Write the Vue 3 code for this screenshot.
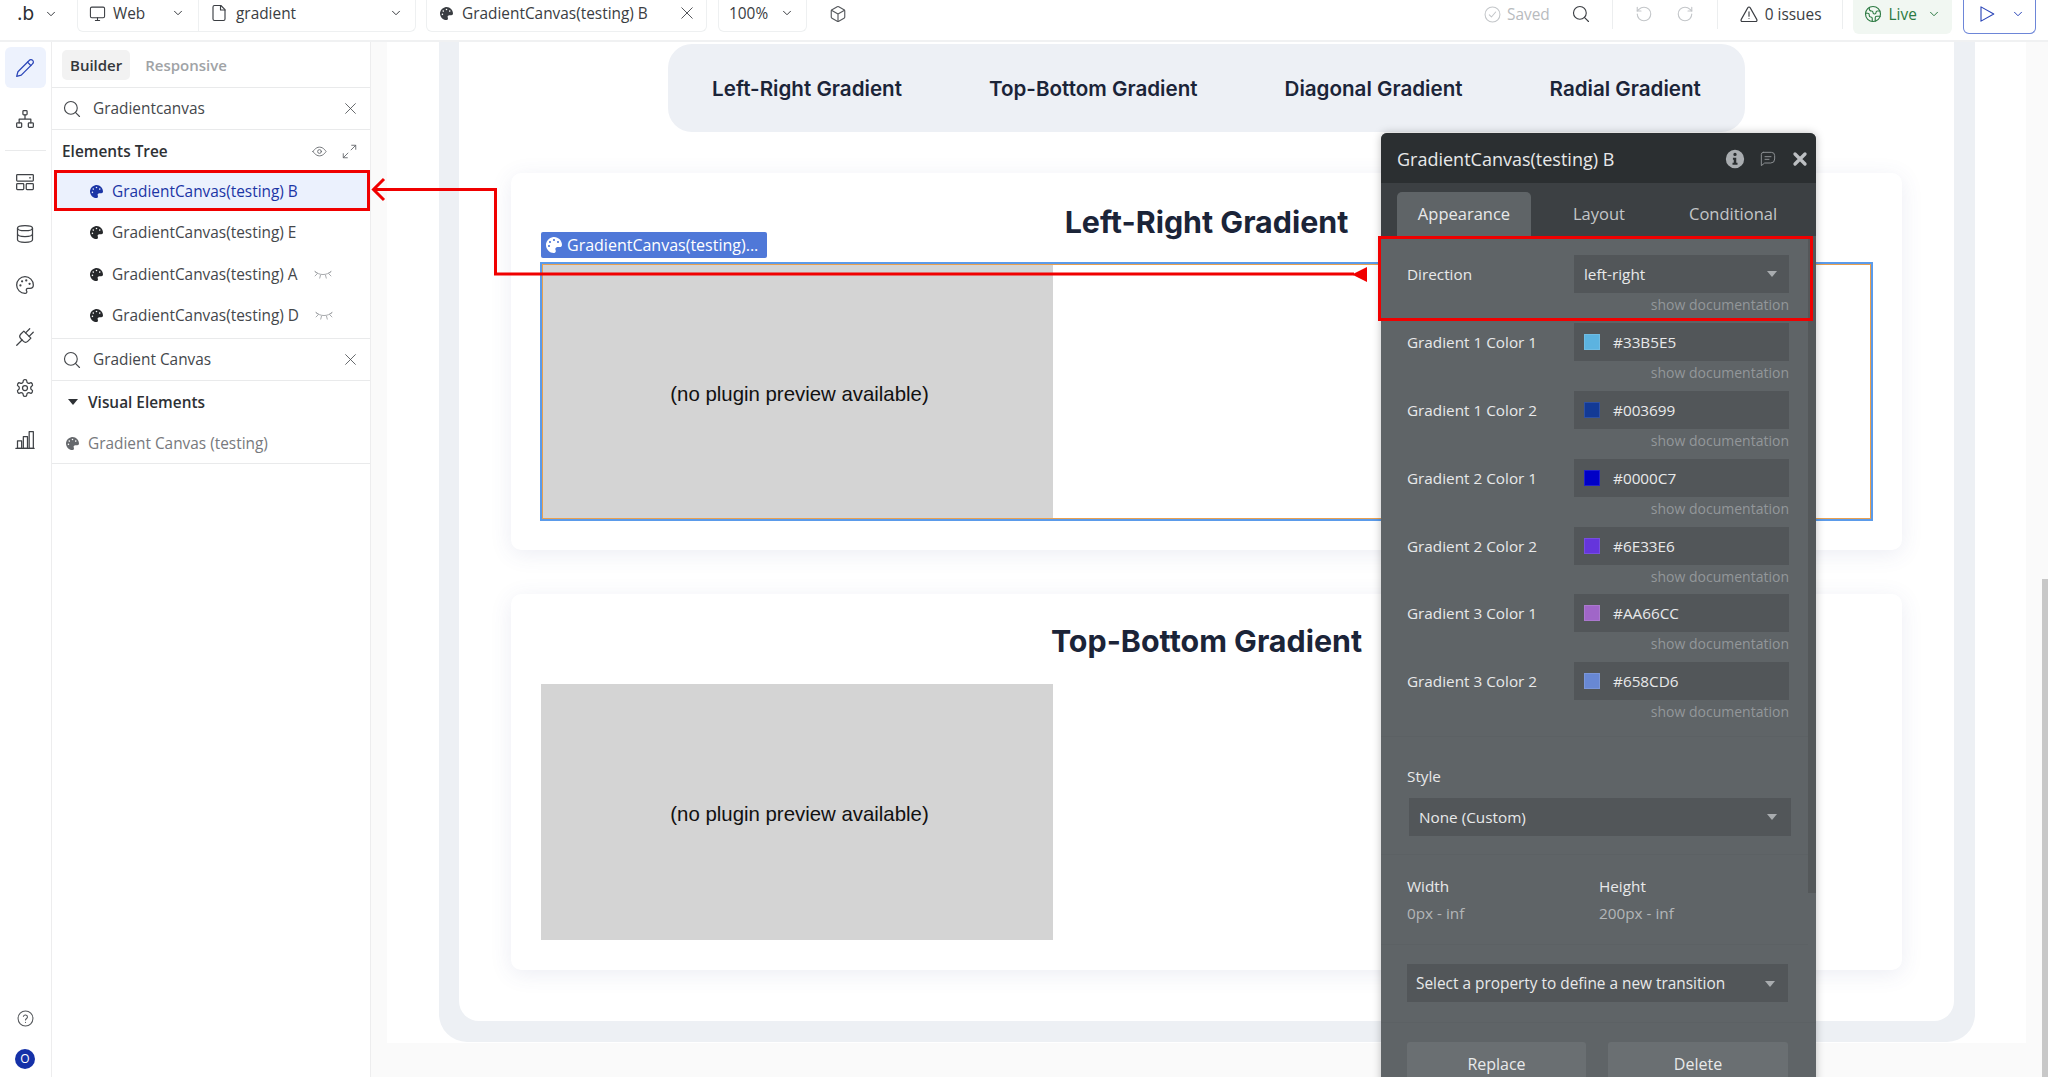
<script setup>
const treeRows = [
  { name: 'GradientCanvas(testing) B', selected: true },
  { name: 'GradientCanvas(testing) E' },
  { name: 'GradientCanvas(testing) A', hidden: true },
  { name: 'GradientCanvas(testing) D', hidden: true }
]

const railTop = ['i-hierarchy']
const railBottom = ['i-layout', 'i-db', 'i-palette-line', 'i-plug', 'i-gear', 'i-chart']

const pills = ['Left-Right Gradient', 'Top-Bottom Gradient', 'Diagonal Gradient', 'Radial Gradient']

const colors = [
  { label: 'Gradient 1 Color 1', value: '#33B5E5', swatch: '#5cb3e0' },
  { label: 'Gradient 1 Color 2', value: '#003699', swatch: '#133a96' },
  { label: 'Gradient 2 Color 1', value: '#0000C7', swatch: '#0000c7' },
  { label: 'Gradient 2 Color 2', value: '#6E33E6', swatch: '#6535dc' },
  { label: 'Gradient 3 Color 1', value: '#AA66CC', swatch: '#a066c8' },
  { label: 'Gradient 3 Color 2', value: '#658CD6', swatch: '#6888d4' }
]
</script>

<template>
  <div class="app">
    <svg class="sprite" aria-hidden="true">
      <symbol id="i-palette-fill" viewBox="0 0 512 512">
        <path fill="currentColor" stroke="none" d="M204.3 5C104.9 24.4 24.8 104.3 5.2 203.4c-37 187 131.7 326.4 258.8 306.7 41.2-6.4 61.4-54.6 42.5-91.7-23.1-45.4 9.9-98.4 60.9-98.4h79.7c35.8 0 64.8-29.6 64.9-65.3C511.5 97.1 368.1-26.9 204.3 5zM96 320c-17.7 0-32-14.3-32-32s14.3-32 32-32 32 14.3 32 32-14.3 32-32 32zm32-128c-17.7 0-32-14.3-32-32s14.3-32 32-32 32 14.3 32 32-14.3 32-32 32zm128-64c-17.7 0-32-14.3-32-32s14.3-32 32-32 32 14.3 32 32-14.3 32-32 32zm128 64c-17.7 0-32-14.3-32-32s14.3-32 32-32 32 14.3 32 32-14.3 32-32 32z" />
      </symbol>
      <symbol id="i-pencil" viewBox="0 0 24 24"><path d="M17 3a2.85 2.83 0 1 1 4 4L7.5 20.5 2 22l1.5-5.5Z" /><path d="m15 5 4 4" /></symbol>
      <symbol id="i-hierarchy" viewBox="0 0 24 24"><rect x="9.5" y="2" width="5" height="5" rx="1" /><rect x="2" y="16.5" width="6" height="5.5" rx="1" /><rect x="16" y="16.5" width="6" height="5.5" rx="1" /><path d="M12 7v5M5 16.5V12h14v4.5" /></symbol>
      <symbol id="i-layout" viewBox="0 0 24 24"><rect x="2" y="3" width="20" height="8" rx="1" /><rect x="2" y="14" width="8.5" height="7" rx="1" /><rect x="13.5" y="14" width="8.5" height="7" rx="1" /><path d="M17.5 7h1" /></symbol>
      <symbol id="i-db" viewBox="0 0 24 24"><ellipse cx="12" cy="5" rx="9" ry="3" /><path d="M3 5v14c0 1.66 4 3 9 3s9-1.34 9-3V5" /><path d="M3 12c0 1.66 4 3 9 3s9-1.34 9-3" /></symbol>
      <symbol id="i-palette-line" viewBox="0 0 24 24"><path d="M12 22a10 10 0 1 1 10-10c0 2.8-2.2 4-4 4h-2.5a2 2 0 0 0-1.5 3.3c.6.8.2 2.7-2 2.7z" /><circle cx="13.5" cy="6.5" r=".6" /><circle cx="17.5" cy="10.5" r=".6" /><circle cx="8.5" cy="7.5" r=".6" /><circle cx="6.5" cy="12.5" r=".6" /></symbol>
      <symbol id="i-plug" viewBox="0 0 24 24"><g transform="rotate(45 12 12)"><path d="M12 26v-9M9 8V1M15 8V1" /><path d="M18 8v5a4 4 0 0 1-4 4h-4a4 4 0 0 1-4-4V8Z" /></g></symbol>
      <symbol id="i-gear" viewBox="0 0 24 24"><path d="M12.22 2h-.44a2 2 0 0 0-2 2v.18a2 2 0 0 1-1 1.73l-.43.25a2 2 0 0 1-2 0l-.15-.08a2 2 0 0 0-2.73.73l-.22.38a2 2 0 0 0 .73 2.73l.15.1a2 2 0 0 1 1 1.72v.51a2 2 0 0 1-1 1.74l-.15.09a2 2 0 0 0-.73 2.73l.22.38a2 2 0 0 0 2.73.73l.15-.08a2 2 0 0 1 2 0l.43.25a2 2 0 0 1 1 1.73V20a2 2 0 0 0 2 2h.44a2 2 0 0 0 2-2v-.18a2 2 0 0 1 1-1.73l.43-.25a2 2 0 0 1 2 0l.15.08a2 2 0 0 0 2.73-.73l.22-.39a2 2 0 0 0-.73-2.73l-.15-.08a2 2 0 0 1-1-1.74v-.5a2 2 0 0 1 1-1.74l.15-.09a2 2 0 0 0 .73-2.73l-.22-.38a2 2 0 0 0-2.73-.73l-.15.08a2 2 0 0 1-2 0l-.43-.25a2 2 0 0 1-1-1.73V4a2 2 0 0 0-2-2z" /><circle cx="12" cy="12" r="3" /></symbol>
      <symbol id="i-chart" viewBox="0 0 24 24"><path d="M1 22h22" /><rect x="3" y="13" width="5" height="9" /><rect x="10" y="8" width="5" height="14" /><rect x="17" y="2" width="5" height="20" /></symbol>
      <symbol id="i-help" viewBox="0 0 24 24"><circle cx="12" cy="12" r="10.5" /><path d="M9 9a3 3 0 0 1 5.8 1c0 2-2.8 2.5-2.8 4" /><path d="M12 17.5h.01" /></symbol>
      <symbol id="i-search" viewBox="0 0 24 24"><circle cx="10.5" cy="10.5" r="8.5" /><path d="m22 22-5.5-5.5" /></symbol>
      <symbol id="i-x" viewBox="0 0 24 24"><path d="M3 3l18 18M21 3 3 21" /></symbol>
      <symbol id="i-eye" viewBox="0 0 24 24"><path d="M1.5 12S5.5 5 12 5s10.5 7 10.5 7-4 7-10.5 7S1.5 12 1.5 12Z" /><circle cx="12" cy="12" r="3" /></symbol>
      <symbol id="i-expand" viewBox="0 0 24 24"><path d="M14.5 9.5 22 2M15.5 2H22v6.5M9.5 14.5 2 22M8.5 22H2v-6.5" /></symbol>
      <symbol id="i-lashes" viewBox="0 0 24 18"><path d="M1 5c6 5.5 16 5.5 22 0" /><path d="M4 8 1 11M8.5 10 7.5 14M15.5 10l1 4M20 8l3 3" /><path d="M1 5l3 2M23 5l-3 2" /></symbol>
      <symbol id="i-monitor" viewBox="0 0 24 24"><rect x="2" y="3" width="20" height="15" rx="2" /><path d="M9 22h6M12 18v4" /></symbol>
      <symbol id="i-doc" viewBox="0 0 24 24"><path d="M14.5 2H6a2 2 0 0 0-2 2v16a2 2 0 0 0 2 2h12a2 2 0 0 0 2-2V7.5Z" /><path d="M14 2v6h6" /></symbol>
      <symbol id="i-chevron" viewBox="0 0 24 24"><path d="m5 8.5 7 7 7-7" /></symbol>
      <symbol id="i-box" viewBox="0 0 24 24"><path d="M21 8a2 2 0 0 0-1-1.73l-7-4a2 2 0 0 0-2 0l-7 4A2 2 0 0 0 3 8v8a2 2 0 0 0 1 1.73l7 4a2 2 0 0 0 2 0l7-4A2 2 0 0 0 21 16Z" /><path d="m3.3 7 8.7 5 8.7-5M12 22V12" /></symbol>
      <symbol id="i-check" viewBox="0 0 24 24"><circle cx="12" cy="12" r="10.5" /><path d="m7.5 12.5 3 3 6-7" /></symbol>
      <symbol id="i-undo" viewBox="0 0 24 24"><path d="M3 12a9 9 0 1 0 9-9 9.75 9.75 0 0 0-6.74 2.74L3 8" /><path d="M3 3v5h5" /></symbol>
      <symbol id="i-redo" viewBox="0 0 24 24"><path d="M21 12a9 9 0 1 1-9-9c2.52 0 4.93 1 6.74 2.74L21 8" /><path d="M21 3v5h-5" /></symbol>
      <symbol id="i-warn" viewBox="0 0 24 24"><path d="m22.5 19.5-9-16a1.7 1.7 0 0 0-3 0l-9 16A1.7 1.7 0 0 0 3 22h18a1.7 1.7 0 0 0 1.5-2.5Z" /><path d="M12 9v6M12 18h.01" /></symbol>
      <symbol id="i-globe" viewBox="0 0 24 24"><path d="M21.54 15H17a2 2 0 0 0-2 2v4.54" /><path d="M7 3.34V5a3 3 0 0 0 3 3 2 2 0 0 1 2 2c0 1.1.9 2 2 2a2 2 0 0 0 2-2c0-1.1.9-2 2-2h3.17" /><path d="M11 21.95V18a2 2 0 0 0-2-2 2 2 0 0 1-2-2v-1a2 2 0 0 0-2-2H2.05" /><circle cx="12" cy="12" r="10" /></symbol>
      <symbol id="i-play" viewBox="0 0 24 24"><path d="M4 2.5v19L21 12Z" /></symbol>
      <symbol id="i-info" viewBox="0 0 24 24"><path fill="currentColor" stroke="none" fill-rule="evenodd" d="M12 1a11 11 0 1 0 0 22 11 11 0 0 0 0-22Zm0 3.5a2 2 0 1 1 0 4 2 2 0 0 1 0-4ZM9.5 10.5h4v6H15V19H9v-2.5h1.5V13h-1Z" /></symbol>
      <symbol id="i-chat" viewBox="0 0 24 24"><path d="M5 2h12a5 5 0 0 1 5 5v5a6 6 0 0 1-6 6H7l-5 4V5a3 3 0 0 1 3-3Z" /><path d="M7.5 8.5h9M7.5 12.5h6" /></symbol>
      <symbol id="i-close-bold" viewBox="0 0 24 24"><path d="M4.5 4.5l15 15M19.5 4.5l-15 15" /></symbol>
    </svg>

    <header class="topbar">
      <div class="brand">
        <span class="logo">.b</span>
        <svg class="ic chev-sm"><use href="#i-chevron" /></svg>
      </div>
      <div class="group first">
        <svg class="ic ic-17"><use href="#i-monitor" /></svg>
        <span>Web</span>
        <svg class="ic chev-sm push"><use href="#i-chevron" /></svg>
      </div>
      <div class="group page-pick">
        <svg class="ic ic-18"><use href="#i-doc" /></svg>
        <span>gradient</span>
        <svg class="ic chev-sm push"><use href="#i-chevron" /></svg>
      </div>
      <div class="group open-tab">
        <svg class="ic ic-13"><use href="#i-palette-fill" /></svg>
        <span>GradientCanvas(testing) B</span>
        <svg class="ic ic-14 push"><use href="#i-x" /></svg>
      </div>
      <div class="group zoom">
        <span>100%</span>
        <svg class="ic chev-sm push"><use href="#i-chevron" /></svg>
      </div>
      <svg class="ic ic-18 cube"><use href="#i-box" /></svg>

      <div class="right">
        <svg class="ic ic-17 faded saved-ic"><use href="#i-check" /></svg>
        <span class="saved">Saved</span>
        <svg class="ic ic-18 search-top"><use href="#i-search" /></svg>
        <i class="vline"></i>
        <svg class="ic ic-18 undo faded"><use href="#i-undo" /></svg>
        <svg class="ic ic-18 redo faded"><use href="#i-redo" /></svg>
        <i class="vline two"></i>
        <svg class="ic ic-18 warn"><use href="#i-warn" /></svg>
        <span class="issues">0 issues</span>
        <i class="vline three"></i>
        <div class="live">
          <svg class="ic ic-18"><use href="#i-globe" /></svg>
          <span>Live</span>
          <svg class="ic chev-sm"><use href="#i-chevron" /></svg>
        </div>
        <div class="run">
          <svg class="ic ic-18"><use href="#i-play" /></svg>
          <svg class="ic chev-sm"><use href="#i-chevron" /></svg>
        </div>
      </div>
    </header>

    <div class="main">
      <nav class="rail">
        <div class="rail-btn active"><svg class="ic ic-20"><use href="#i-pencil" /></svg></div>
        <div v-for="icon in railTop" :key="icon" class="rail-btn"><svg class="ic ic-20"><use :href="'#' + icon" /></svg></div>
        <i class="rail-line"></i>
        <div v-for="icon in railBottom" :key="icon" class="rail-btn"><svg class="ic ic-20"><use :href="'#' + icon" /></svg></div>
        <svg class="ic ic-17 help"><use href="#i-help" /></svg>
        <div class="avatar">O</div>
      </nav>

      <aside class="sidebar">
        <div class="side-tabs">
          <span class="side-tab on">Builder</span>
          <span class="side-tab">Responsive</span>
        </div>
        <div class="search-row">
          <svg class="ic ic-18"><use href="#i-search" /></svg>
          <span>Gradientcanvas</span>
          <svg class="ic ic-13 push"><use href="#i-x" /></svg>
        </div>
        <div class="tree-head">
          <b>Elements Tree</b>
          <svg class="ic ic-15 eye"><use href="#i-eye" /></svg>
          <svg class="ic ic-15 expand"><use href="#i-expand" /></svg>
        </div>
        <div class="tree">
          <div v-for="row in treeRows" :key="row.name" class="tree-row" :class="{ selected: row.selected }">
            <svg class="ic ic-13"><use href="#i-palette-fill" /></svg>
            <span>{{ row.name }}</span>
            <svg v-if="row.hidden" class="ic lashes"><use href="#i-lashes" /></svg>
          </div>
        </div>
        <div class="search-row second">
          <svg class="ic ic-18"><use href="#i-search" /></svg>
          <span>Gradient Canvas</span>
          <svg class="ic ic-13 push"><use href="#i-x" /></svg>
        </div>
        <div class="visual-head">
          <i class="caret"></i>
          <b>Visual Elements</b>
        </div>
        <div class="visual-row">
          <svg class="ic ic-13"><use href="#i-palette-fill" /></svg>
          <span>Gradient Canvas (testing)</span>
        </div>
      </aside>

      <section class="canvas">
        <div class="page">
          <div class="frame">
            <div class="frame-inner">
              <div class="pills">
                <span v-for="p in pills" :key="p">{{ p }}</span>
              </div>

              <div class="card card-a">
                <h2>Left-Right Gradient</h2>
                <div class="preview">
                  <div class="plugin">(no plugin preview available)</div>
                  <div class="tag">
                    <svg class="ic ic-16"><use href="#i-palette-fill" /></svg>
                    <span>GradientCanvas(testing)...</span>
                  </div>
                  <div class="sel-box"></div>
                </div>
              </div>

              <div class="card card-b">
                <h2>Top-Bottom Gradient</h2>
                <div class="preview">
                  <div class="plugin">(no plugin preview available)</div>
                </div>
              </div>
            </div>
          </div>
        </div>

        <div class="panel">
          <div class="panel-head">
            <span>GradientCanvas(testing) B</span>
            <svg class="ic ic-20 info"><use href="#i-info" /></svg>
            <svg class="ic ic-16 chat"><use href="#i-chat" /></svg>
            <svg class="ic ic-16 close"><use href="#i-close-bold" /></svg>
          </div>
          <div class="panel-tabs">
            <span class="panel-tab on">Appearance</span>
            <span class="panel-tab layout">Layout</span>
            <span class="panel-tab cond">Conditional</span>
          </div>
          <div class="panel-body">
            <div class="prop">
              <label>Direction</label>
              <div class="field">
                <span>left-right</span>
                <i class="arrow"></i>
              </div>
              <em>show documentation</em>
            </div>
            <div v-for="c in colors" :key="c.label" class="prop">
              <label>{{ c.label }}</label>
              <div class="field">
                <i class="swatch" :style="{ background: c.swatch }"></i>
                <span>{{ c.value }}</span>
              </div>
              <em>show documentation</em>
            </div>

            <div class="block style-block">
              <label>Style</label>
              <div class="wide style-select">
                <span>None (Custom)</span>
                <i class="arrow"></i>
              </div>
            </div>
            <div class="block size-block">
              <div>
                <label>Width</label>
                <p>0px - inf</p>
              </div>
              <div>
                <label>Height</label>
                <p>200px - inf</p>
              </div>
            </div>
            <div class="block trans-block">
              <div class="wide">
                <span>Select a property to define a new transition</span>
                <i class="arrow"></i>
              </div>
            </div>
            <div class="btns">
              <button>Replace</button>
              <button>Delete</button>
            </div>

            <div class="panel-scroll"></div>
            <div class="red-box"></div>
          </div>
        </div>

        <div class="scrollbar"></div>
      </section>
    </div>

    <svg class="annot" viewBox="0 0 2048 1077" width="2048" height="1077">
      <path d="M1354 274H495.5V189.5H374" />
      <path d="M384 179 373.5 189.5 384 200" />
      <path class="tip" d="M1352 274.5 1367 267V282Z" />
    </svg>
  </div>
</template>

<style>
html,
body {
  margin: 0;
  padding: 0;
  overflow: hidden;
}
</style>

<style scoped>
.app {
  position: relative;
  width: 2048px;
  height: 1077px;
  overflow: hidden;
  display: flex;
  flex-direction: column;
  background: #fff;
  color: #3a3d42;
  font-family: "Open Sans", "Noto Sans", sans-serif;
  font-size: 15.4px;
}

.sprite {
  position: absolute;
  width: 0;
  height: 0;
}

.ic {
  flex: none;
  fill: none;
  stroke: currentColor;
  stroke-width: 1.5;
  stroke-linecap: round;
  stroke-linejoin: round;
}
.ic-13 { width: 13px; height: 13px; }
.ic-14 { width: 14px; height: 14px; }
.ic-15 { width: 15px; height: 15px; }
.ic-16 { width: 16px; height: 16px; }
.ic-17 { width: 17px; height: 17px; }
.ic-18 { width: 18px; height: 18px; }
.ic-20 { width: 20px; height: 20px; }
.chev-sm { width: 12px; height: 12px; stroke-width: 2; }
.push { margin-left: auto; }
.faded { color: #c3c6c9; }

/* top bar */
.topbar {
  flex: none;
  height: 42px;
  box-sizing: border-box;
  display: flex;
  align-items: flex-start;
  border-bottom: 2px solid #f0f1f2;
}
.brand {
  width: 77px;
  height: 27px;
  display: flex;
  align-items: center;
  padding-left: 17px;
  box-sizing: border-box;
}
.logo {
  width: 28px;
  font-size: 19px;
  line-height: 27px;
  font-family: "Inter", sans-serif;
  color: #2b2e33;
}
.group {
  height: 32px;
  box-sizing: border-box;
  padding: 0 14px 5px 11px;
  display: flex;
  align-items: center;
  border: 1px solid #eef0f1;
  border-top: 0;
  border-left: 0;
  gap: 7px;
}
.group.first {
  width: 122px;
  border-left: 1px solid #eef0f1;
  border-bottom-left-radius: 6px;
}
.group.page-pick {
  width: 217px;
  gap: 8px;
  padding-right: 13px;
  border-bottom-right-radius: 6px;
}
.group.open-tab {
  width: 281px;
  margin-left: 10px;
  padding-left: 13px;
  padding-right: 12px;
  gap: 9px;
  border-left: 1px solid #eef0f1;
  border-radius: 0 0 6px 6px;
}
.group.zoom {
  width: 89px;
  margin-left: 11px;
  padding-left: 10px;
  padding-right: 13px;
  border-left: 1px solid #eef0f1;
  border-radius: 0 0 6px 6px;
}
.cube {
  margin: 5px 0 0 22px;
  color: #55585c;
}
.right {
  flex: 1;
  height: 28px;
  display: flex;
  align-items: center;
  box-sizing: border-box;
}
.saved-ic { margin-left: 637px; }
.saved { margin-left: 6px; color: #b8bbbe; }
.search-top { margin-left: 22px; }
.vline {
  align-self: flex-start;
  width: 1px;
  height: 29px;
  background: #eceeef;
  margin-left: 22px;
}
.undo { margin-left: 22px; }
.redo { margin-left: 23px; }
.vline.two { margin-left: 23px; }
.warn { margin-left: 22px; }
.issues { margin-left: 7px; color: #3a3d42; }
.vline.three { margin-left: 20px; }
.live {
  align-self: flex-start;
  width: 99px;
  height: 34px;
  box-sizing: border-box;
  margin-left: 10px;
  padding: 0 0 6px 11px;
  display: flex;
  align-items: center;
  gap: 7px;
  background: #f1f7f2;
  border-radius: 0 0 6px 6px;
  color: #2c7a42;
}
.live .chev-sm { margin-left: 4px; }
.run {
  align-self: flex-start;
  width: 73px;
  height: 34px;
  box-sizing: border-box;
  margin-left: 11px;
  padding: 0 0 6px 14px;
  display: flex;
  align-items: center;
  gap: 16px;
  border: 1.5px solid #6d86d8;
  border-top: 0;
  border-radius: 0 0 6px 6px;
  color: #2a45b8;
}

.main {
  flex: 1;
  min-height: 0;
  display: flex;
}

/* left rail */
.rail {
  flex: none;
  width: 52px;
  box-sizing: border-box;
  padding: 5px 6px 8px 5px;
  border-right: 1px solid #ededee;
  display: flex;
  flex-direction: column;
  align-items: center;
  gap: 10.5px;
  color: #3f4246;
}
.rail-btn {
  width: 41px;
  height: 41px;
  display: flex;
  align-items: center;
  justify-content: center;
  border-radius: 6px;
  flex: none;
}
.rail-btn.active {
  background: #edf2fd;
  color: #2a45b8;
}
.rail-line {
  width: 41px;
  height: 1px;
  background: #e9eaeb;
}
.help {
  margin-top: auto;
  margin-bottom: 12px;
  color: #55585c;
}
.avatar {
  width: 20px;
  height: 20px;
  border-radius: 50%;
  background: #1531a8;
  color: #fff;
  font-size: 12px;
  line-height: 20px;
  text-align: center;
}

/* sidebar */
.sidebar {
  flex: none;
  width: 319px;
  box-sizing: border-box;
  border-right: 1px solid #ededee;
}
.side-tabs {
  height: 46px;
  box-sizing: border-box;
  padding: 8px 10px 0;
  display: flex;
  gap: 7px;
  border-bottom: 1px solid #e9eaeb;
}
.side-tab {
  height: 30px;
  line-height: 30px;
  padding: 0 8px;
  font-weight: 600;
  font-size: 15px;
  color: #a0a3a6;
  border-radius: 5px;
}
.side-tab.on {
  background: #f2f2f2;
  color: #34373b;
}
.search-row {
  height: 42px;
  box-sizing: border-box;
  padding: 0 13px 0 11px;
  display: flex;
  align-items: center;
  gap: 12px;
  border-bottom: 1px solid #e9eaeb;
  color: #44474b;
}
.tree-head {
  height: 40px;
  padding: 2px 13px 0 10px;
  box-sizing: border-box;
  display: flex;
  align-items: center;
}
.tree-head b,
.visual-head b {
  font-weight: 600;
  color: #2e3135;
}
.eye {
  margin-left: auto;
  color: #6b6e72;
}
.expand {
  margin-left: 15px;
  color: #6b6e72;
}
.tree {
  height: 169px;
  border-bottom: 1px solid #e9eaeb;
  box-sizing: border-box;
}
.tree-row {
  height: 41.3px;
  box-sizing: border-box;
  padding: 2px 0 0 38px;
  display: flex;
  align-items: center;
  gap: 9px;
  color: #44474b;
}
.tree-row .ic-13 { color: #26282b; }
.tree-row.selected {
  margin-left: 2px;
  padding: 1px 0 0 33px;
  border: 3px solid #f00000;
  background: #ebf1fd;
  color: #1b35a5;
}
.tree-row.selected .ic-13 { color: #1b35a5; }
.lashes {
  width: 18px;
  height: 13px;
  margin-left: 7px;
  color: #9a9da0;
  stroke-width: 1.2;
}
.search-row.second { height: 42px; }
.visual-head {
  height: 42px;
  padding-left: 16px;
  display: flex;
  align-items: center;
  gap: 10px;
  box-sizing: border-box;
}
.caret {
  width: 0;
  height: 0;
  border: 5px solid transparent;
  border-top: 6px solid #2e3135;
  border-bottom: 0;
}
.visual-row {
  height: 40px;
  padding-left: 14px;
  display: flex;
  align-items: center;
  gap: 9px;
  border-bottom: 1px solid #e9eaeb;
  color: #77797d;
}
.visual-row .ic-13 { color: #66696d; }

/* canvas */
.canvas {
  flex: 1;
  min-width: 0;
  position: relative;
  overflow: hidden;
  background: #fafafa;
  padding-left: 16px;
}
.page {
  width: 1639px;
  height: 1001px;
  background: #fff;
  padding-left: 52px;
  box-sizing: border-box;
}
.frame {
  width: 1536px;
  height: 1000px;
  box-sizing: border-box;
  padding: 0 21px 21px 20px;
  background: #edf0f4;
  border-radius: 0 0 28px 28px;
}
.frame-inner {
  height: 100%;
  box-sizing: border-box;
  padding: 2px 52px 0;
  background: #fff;
  border-radius: 0 0 20px 20px;
}
.pills {
  width: 1077px;
  height: 88px;
  margin: 0 auto 41px;
  display: flex;
  align-items: center;
  justify-content: center;
  gap: 87px;
  background: #edf0f5;
  border-radius: 24px;
  font-family: "Inter", sans-serif;
  font-weight: 600;
  font-size: 20.6px;
  color: #1b2438;
}
.card {
  box-sizing: border-box;
  padding: 0 30px 30px;
  background: #fff;
  border-radius: 10px;
  box-shadow: 0 4px 22px rgba(70, 80, 150, 0.1);
}
.card h2 {
  margin: 0;
  height: 40px;
  line-height: 40px;
  text-align: center;
  font-family: "Inter", sans-serif;
  font-weight: 700;
  font-size: 30.4px;
  color: #1b2438;
}
.card-a {
  height: 377px;
  padding-top: 29px;
  margin-bottom: 44px;
}
.card-a h2 { margin-bottom: 22px; }
.card-b {
  height: 376px;
  padding-top: 27px;
}
.card-b h2 { margin-bottom: 23px; }
.preview {
  position: relative;
  height: 256px;
}
.plugin {
  width: 512px;
  height: 256px;
  box-sizing: border-box;
  padding: 5px 0 0 5px;
  background: #d4d4d4;
  display: flex;
  align-items: center;
  justify-content: center;
  font-family: "Liberation Sans", Arial, sans-serif;
  font-size: 20.4px;
  color: #111;
}
.tag {
  position: absolute;
  left: 0;
  top: -32px;
  width: 226px;
  height: 26px;
  box-sizing: border-box;
  padding-left: 5px;
  display: flex;
  align-items: center;
  gap: 5px;
  background: #4f78d8;
  border-radius: 2px;
  color: #fff;
  font-size: 16px;
}
.sel-box {
  position: absolute;
  left: -1px;
  top: -2px;
  right: -1px;
  bottom: -1px;
  border: 2px solid #5b9bea;
  box-shadow: inset 0 0 0 1px #e8a050;
}

/* property panel */
.panel {
  position: absolute;
  left: 1010px;
  top: 91px;
  width: 435px;
  height: 990px;
  background: #5f6467;
  border-radius: 6px 6px 0 0;
  box-shadow: 0 0 8px rgba(0, 0, 0, 0.25);
  color: #e8e9ea;
  font-size: 15.3px;
  z-index: 3;
}
.panel-head {
  height: 50px;
  box-sizing: border-box;
  padding: 1px 8px 0 16px;
  display: flex;
  align-items: center;
  background: #2b2f31;
  border-radius: 6px 6px 0 0;
  font-size: 18px;
}
.info {
  margin-left: auto;
  color: #a9adb0;
}
.chat {
  margin-left: 15px;
  color: #8b8f92;
}
.close {
  margin-left: 16px;
  color: #bcbfc2;
  stroke-width: 5;
}
.panel-tabs {
  height: 53px;
  box-sizing: border-box;
  padding: 9px 0 0 16px;
  display: flex;
  background: #3c4043;
  font-size: 16.5px;
}
.panel-tab {
  color: #c3c6c8;
  line-height: 44px;
}
.panel-tab.on {
  width: 134px;
  text-align: center;
  background: #5f6467;
  border-radius: 5px 5px 0 0;
  color: #e8e9ea;
}
.panel-tab.layout { margin-left: 42px; }
.panel-tab.cond { margin-left: 64px; }
.panel-body {
  position: relative;
  padding-top: 19px;
}
.prop {
  height: 67.9px;
  box-sizing: border-box;
  padding: 0 27px 0 26px;
  display: grid;
  grid-template-columns: 167px 215px;
  grid-template-rows: 38px auto;
  align-items: center;
}
.prop em {
  grid-column: 2;
  align-self: start;
  font-style: normal;
  font-size: 14px;
  line-height: 24px;
  text-align: right;
  color: #93979a;
}
.field {
  height: 38px;
  box-sizing: border-box;
  padding: 0 10px;
  display: flex;
  align-items: center;
  gap: 13px;
  background: #525659;
}
.swatch {
  width: 16px;
  height: 16px;
  box-sizing: border-box;
  border: 1px solid rgba(255, 255, 255, 0.12);
}
.arrow {
  width: 0;
  height: 0;
  margin-left: auto;
  border: 5.5px solid transparent;
  border-top: 6px solid #a9acaf;
  border-bottom: 0;
}
.field .arrow { margin-right: 2px; }
.block {
  margin: 6px 8px 0 0;
  padding: 0 26px;
  border-top: 1px solid #5c6164;
}
.style-block {
  height: 118px;
  padding-top: 28px;
  box-sizing: border-box;
}
.block label { display: block; line-height: 22px; }
.wide {
  height: 38px;
  box-sizing: border-box;
  padding: 0 14px 0 10px;
  display: flex;
  align-items: center;
  background: #525659;
}
.style-select {
  margin: 11px -9px 0 2px;
}
.size-block {
  margin-top: 0;
  height: 90px;
  box-sizing: border-box;
  padding-top: 20px;
  display: grid;
  grid-template-columns: 192px 1fr;
}
.size-block p {
  margin: 5px 0 0;
  color: #b3b6b8;
  line-height: 22px;
}
.trans-block {
  margin-top: 0;
  height: 78px;
  box-sizing: border-box;
  padding: 19px 20px 0 26px;
}
.trans-block .wide {
  padding: 1px 13px 0 9px;
  font-size: 15.4px;
}
.btns {
  padding: 19px 28px 0 26px;
  display: grid;
  grid-template-columns: 179px 180px;
  gap: 22px;
  border-top: 1px solid #5c6164;
}
.btns button {
  height: 44px;
  border: 0;
  border-radius: 3px;
  background: #6a6f72;
  color: #e8e9ea;
  font: inherit;
  font-size: 16px;
}
.panel-scroll {
  position: absolute;
  top: 0;
  right: 0;
  width: 8px;
  height: 657px;
  background: #54585a;
}
.red-box {
  position: absolute;
  left: -3px;
  top: 0;
  width: 435px;
  height: 85px;
  box-sizing: border-box;
  border: 3px solid #f00000;
}

.scrollbar {
  position: absolute;
  right: 0;
  top: 537px;
  bottom: 0;
  width: 6px;
  background: #c8c8c8;
}

.annot {
  position: absolute;
  left: 0;
  top: 0;
  z-index: 2;
  fill: none;
  stroke: #f00000;
  stroke-width: 3;
  pointer-events: none;
}
.annot .tip {
  fill: #f00000;
  stroke: none;
}
</style>
